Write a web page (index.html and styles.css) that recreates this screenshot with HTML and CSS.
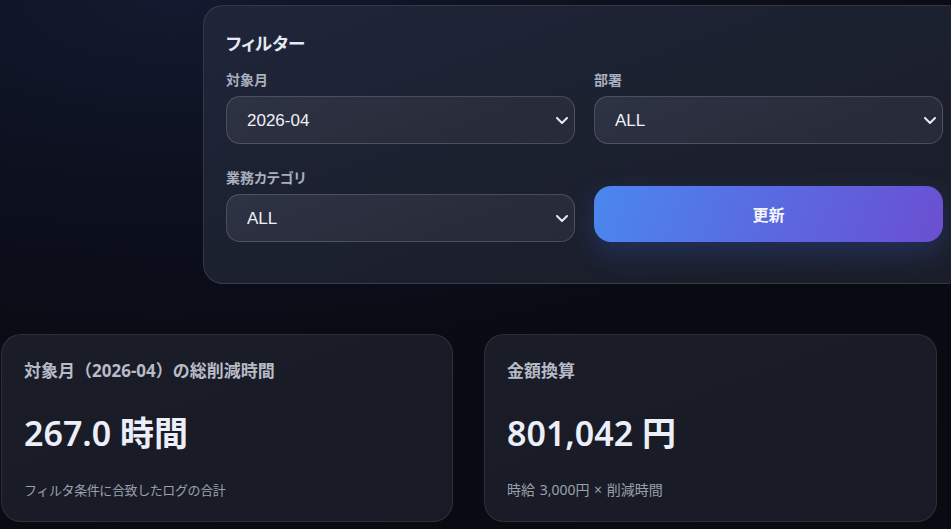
FILE: index.html
```html
<!DOCTYPE html>
<html lang="ja">
<head>
<meta charset="utf-8">
<title>削減時間ダッシュボード</title>
<link rel="stylesheet" href="styles.css">
</head>
<body>
<div class="page">
  <section class="filter-panel">
    <h2 class="panel-title">フィルター</h2>
    <div class="filter-grid">
      <div class="field">
        <label class="field-label" for="month">対象月</label>
        <div class="select-wrap">
          <select id="month" class="select"><option>2026-04</option></select>
          <svg class="chevron" viewBox="0 0 12 7" width="12" height="7"><path d="M1 1l5 5 5-5" fill="none" stroke="currentColor" stroke-width="2" stroke-linecap="round" stroke-linejoin="round"/></svg>
        </div>
      </div>
      <div class="field">
        <label class="field-label" for="dept">部署</label>
        <div class="select-wrap">
          <select id="dept" class="select"><option>ALL</option></select>
          <svg class="chevron" viewBox="0 0 12 7" width="12" height="7"><path d="M1 1l5 5 5-5" fill="none" stroke="currentColor" stroke-width="2" stroke-linecap="round" stroke-linejoin="round"/></svg>
        </div>
      </div>
      <div class="field">
        <label class="field-label" for="cat">業務カテゴリ</label>
        <div class="select-wrap">
          <select id="cat" class="select"><option>ALL</option></select>
          <svg class="chevron" viewBox="0 0 12 7" width="12" height="7"><path d="M1 1l5 5 5-5" fill="none" stroke="currentColor" stroke-width="2" stroke-linecap="round" stroke-linejoin="round"/></svg>
        </div>
      </div>
      <div class="field field-action">
        <button class="btn-update" type="button">更新</button>
      </div>
    </div>
  </section>

  <section class="stats">
    <article class="stat-card">
      <h3 class="stat-title">対象月（2026-04）の総削減時間</h3>
      <div class="stat-value">267.0 時間</div>
      <p class="stat-note stat-note-hint">フィルタ条件に合致したログの合計</p>
    </article>
    <article class="stat-card">
      <h3 class="stat-title">金額換算</h3>
      <div class="stat-value">801,042 円</div>
      <p class="stat-note stat-note-formula">時給 3,000円 × 削減時間</p>
    </article>
  </section>
</div>
</body>
</html>
```
FILE: styles.css
```css
html, body {
  margin: 0;
  padding: 0;
}

body {
  width: 951px;
  height: 529px;
  overflow: hidden;
  background: radial-gradient(ellipse 90% 70% at 18% 0%, #131a2f 0%, #0d1120 45%, #090b13 100%);
  font-family: "Noto Sans CJK JP", "Noto Sans", sans-serif;
  color: #e9ecf4;
}

.page {
  display: flex;
  flex-direction: column;
  align-items: flex-start;
}

.filter-panel {
  margin: 5px 0 0 203px;
  width: 763px;
  box-sizing: border-box;
  padding: 25px 22px 41px;
  border: 1px solid rgba(255, 255, 255, 0.11);
  border-radius: 20px;
  background: linear-gradient(160deg, #1f263a 0%, #1c2130 45%, #1b1e29 100%);
  flex-shrink: 0;
}

.panel-title {
  margin: 0 0 14px;
  font-size: 17.5px;
  line-height: 24px;
  font-weight: 700;
  color: #e6e9f2;
  font-feature-settings: "palt";
}

.filter-grid {
  display: grid;
  grid-template-columns: 349px 349px;
  column-gap: 19px;
  row-gap: 23px;
}

.field {
  display: flex;
  flex-direction: column;
  gap: 7px;
}

.field-action {
  justify-content: flex-end;
}

.field-label {
  font-size: 14px;
  line-height: 20px;
  font-weight: 700;
  color: #a9afbd;
  font-feature-settings: "palt";
}

.select-wrap {
  position: relative;
}

.select {
  appearance: none;
  -webkit-appearance: none;
  display: block;
  width: 100%;
  height: 48px;
  box-sizing: border-box;
  padding: 0 36px 0 20px;
  border: 1px solid rgba(255, 255, 255, 0.16);
  border-radius: 14px;
  background: linear-gradient(160deg, #2e3345 0%, #292d3b 60%, #272a37 100%);
  color: #eef0f6;
  font-family: "Liberation Sans", Arial, sans-serif;
  font-size: 17px;
  outline: none;
}

.chevron {
  position: absolute;
  right: 7px;
  top: 21px;
  color: #e6e9f0;
  pointer-events: none;
}

.btn-update {
  height: 56px;
  width: 100%;
  border: none;
  border-radius: 17px;
  background: linear-gradient(110deg, #4a87ef 0%, #5a6ae0 50%, #6a4fd1 100%);
  color: #f4f5fb;
  font-family: "Noto Sans CJK JP", sans-serif;
  font-size: 16px;
  font-weight: 700;
  box-shadow: 0 10px 28px rgba(58, 96, 220, 0.28);
  cursor: pointer;
}

.stats {
  display: grid;
  grid-template-columns: 452px 453px;
  column-gap: 31px;
  margin: 50px 0 0 1px;
}

.stat-card {
  height: 188px;
  box-sizing: border-box;
  padding: 25px 22px 21px;
  border: 1px solid rgba(255, 255, 255, 0.09);
  border-radius: 20px;
  background: linear-gradient(160deg, #1a1d28 0%, #181b25 100%);
}

.stat-title {
  margin: 0 0 30px;
  font-family: "Noto Sans", "Noto Sans CJK JP", sans-serif;
  font-size: 17px;
  line-height: 22px;
  font-weight: 700;
  color: #b7bbc7;
}

.stat-value {
  font-family: "Noto Sans", "Noto Sans CJK JP", sans-serif;
  font-size: 34px;
  line-height: 42px;
  font-weight: 600;
  color: #eceffa;
}

.stat-note {
  margin: 26px 0 0;
  font-family: "Noto Sans", "Noto Sans CJK JP", sans-serif;
  font-size: 13px;
  line-height: 20px;
  color: #9aa0ad;
}

.stat-note-hint {
  letter-spacing: -0.4px;
}

.stat-note-formula {
  font-size: 14px;
  word-spacing: 1px;
}
```
